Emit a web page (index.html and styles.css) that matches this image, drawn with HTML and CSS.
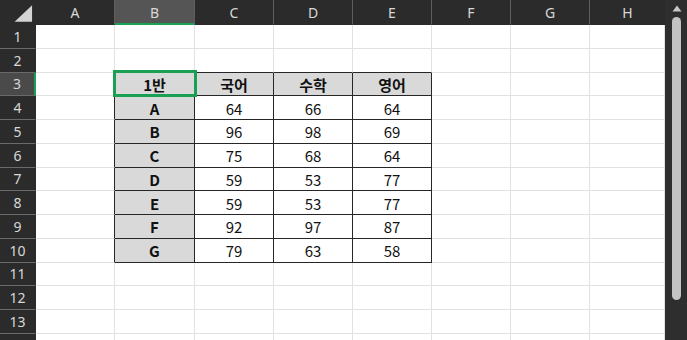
FILE: index.html
```html
<!DOCTYPE html>
<html lang="ko">
<head>
<meta charset="utf-8">
<title>Sheet</title>
<link rel="stylesheet" href="styles.css">
</head>
<body>
<div class="app">
  <div class="sheet">
    <div class="hd corner"><svg width="36" height="25" viewBox="0 0 36 25"><polygon points="33,5 33,22 15,22" fill="#d4d4d4"/></svg></div>
    <div class="hd ch">A</div><div class="hd ch sel">B</div><div class="hd ch">C</div><div class="hd ch">D</div><div class="hd ch">E</div><div class="hd ch">F</div><div class="hd ch">G</div><div class="hd ch last">H</div>

    <div class="hd rh">1</div><div class="c"></div><div class="c"></div><div class="c"></div><div class="c"></div><div class="c"></div><div class="c"></div><div class="c"></div><div class="c"></div>
    <div class="hd rh">2</div><div class="c"></div><div class="c bb"></div><div class="c bb"></div><div class="c bb"></div><div class="c bb"></div><div class="c"></div><div class="c"></div><div class="c"></div>
    <div class="hd rh sel">3</div><div class="c rb"></div><div class="c t th active">1반</div><div class="c t th">국어</div><div class="c t th">수학</div><div class="c t th">영어</div><div class="c"></div><div class="c"></div><div class="c"></div>
    <div class="hd rh">4</div><div class="c rb"></div><div class="c t th">A</div><div class="c t">64</div><div class="c t">66</div><div class="c t">64</div><div class="c"></div><div class="c"></div><div class="c"></div>
    <div class="hd rh">5</div><div class="c rb"></div><div class="c t th">B</div><div class="c t">96</div><div class="c t">98</div><div class="c t">69</div><div class="c"></div><div class="c"></div><div class="c"></div>
    <div class="hd rh">6</div><div class="c rb"></div><div class="c t th">C</div><div class="c t">75</div><div class="c t">68</div><div class="c t">64</div><div class="c"></div><div class="c"></div><div class="c"></div>
    <div class="hd rh">7</div><div class="c rb"></div><div class="c t th">D</div><div class="c t">59</div><div class="c t">53</div><div class="c t">77</div><div class="c"></div><div class="c"></div><div class="c"></div>
    <div class="hd rh">8</div><div class="c rb"></div><div class="c t th">E</div><div class="c t">59</div><div class="c t">53</div><div class="c t">77</div><div class="c"></div><div class="c"></div><div class="c"></div>
    <div class="hd rh">9</div><div class="c rb"></div><div class="c t th">F</div><div class="c t">92</div><div class="c t">97</div><div class="c t">87</div><div class="c"></div><div class="c"></div><div class="c"></div>
    <div class="hd rh">10</div><div class="c rb"></div><div class="c t th">G</div><div class="c t">79</div><div class="c t">63</div><div class="c t">58</div><div class="c"></div><div class="c"></div><div class="c"></div>
    <div class="hd rh">11</div><div class="c"></div><div class="c"></div><div class="c"></div><div class="c"></div><div class="c"></div><div class="c"></div><div class="c"></div><div class="c"></div>
    <div class="hd rh">12</div><div class="c"></div><div class="c"></div><div class="c"></div><div class="c"></div><div class="c"></div><div class="c"></div><div class="c"></div><div class="c"></div>
    <div class="hd rh">13</div><div class="c"></div><div class="c"></div><div class="c"></div><div class="c"></div><div class="c"></div><div class="c"></div><div class="c"></div><div class="c"></div>
    <div class="hd rh"></div><div class="c"></div><div class="c"></div><div class="c"></div><div class="c"></div><div class="c"></div><div class="c"></div><div class="c"></div><div class="c"></div>
  </div>
  <div class="vscroll">
    <svg class="arrow" width="10" height="7" viewBox="0 0 10 7"><polygon points="5,0.5 9.5,6.5 0.5,6.5" fill="#c8c8c8"/></svg>
    <div class="thumb"></div>
  </div>
</div>
</body>
</html>
```

FILE: styles.css
```css
* { box-sizing: border-box; }
html, body {
  margin: 0;
  padding: 0;
  width: 687px;
  height: 340px;
  overflow: hidden;
  background: #2b2b2b;
}
.app {
  display: flex;
  width: 687px;
  height: 340px;
  overflow: hidden;
}
.sheet {
  display: grid;
  width: 665px;
  height: 340px;
  overflow: hidden;
  grid-template-columns: 36px 79px 80px 79px 79px 79px 79px 79px 75px;
  grid-template-rows: 25px repeat(14, 23.75px);
  background: #ffffff;
  font-family: "Noto Sans CJK KR", "Noto Sans", sans-serif;
}
.hd {
  background: #2b2b2b;
  color: #d8d8d8;
  font-family: "Noto Sans", "Open Sans", sans-serif;
  font-size: 14px;
  display: flex;
  align-items: center;
  justify-content: center;
}
.corner {
  border-right: 1px solid #2b2b2b;
}
.ch {
  border-right: 1px solid #5e5e5e;
  border-bottom: 1px solid #2b2b2b;
  padding-top: 1px;
}
.ch.last { border-right: none; }
.ch.sel {
  background: #555555;
  border-bottom: 2px solid #1aa055;
}
.rh {
  border-bottom: 1px solid #6a6a6a;
  border-right: 1px solid #2b2b2b;
}
.rh.sel {
  background: #4a4a4a;
  border-right: 2px solid #1aa055;
}
.c {
  border-right: 1px solid #e2e2e2;
  border-bottom: 1px solid #e2e2e2;
  display: flex;
  align-items: center;
  justify-content: center;
  font-size: 15px;
  color: #111;
  line-height: 1;
  padding-top: 1px;
}
.c.rb { border-right-color: #262626; }
.c.bb { border-bottom-color: #262626; }
.c.t {
  border-right-color: #262626;
  border-bottom-color: #262626;
}
.c.th {
  background: #d9d9d9;
  font-weight: bold;
}
.active { position: relative; }
.active::after {
  content: "";
  position: absolute;
  top: -3px;
  left: -2px;
  right: -3px;
  bottom: -2px;
  border: 3px solid #1aa055;
}
.vscroll {
  width: 22px;
  height: 340px;
  background: #2e2e2e;
  display: flex;
  flex-direction: column;
  align-items: center;
  padding-top: 5px;
  padding-left: 1px;
}
.arrow { display: block; }
.thumb {
  margin-top: 5px;
  width: 9px;
  height: 283px;
  background: #c3c3c3;
  border-radius: 5px;
}
```
